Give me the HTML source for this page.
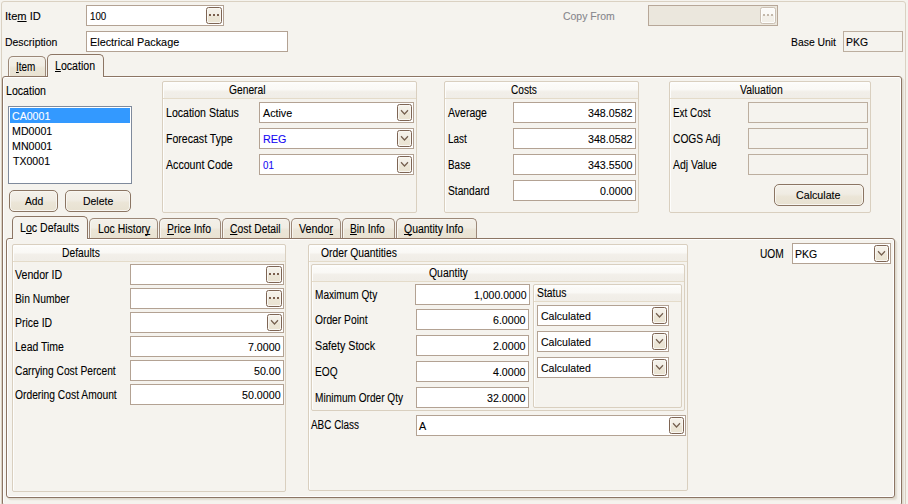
<!DOCTYPE html>
<html><head><meta charset="utf-8"><title>Item Location</title>
<style>
*{box-sizing:border-box;margin:0;padding:0}
html,body{width:908px;height:504px;overflow:hidden;background:#f5f3ee}
body{position:relative;font-family:"Liberation Sans",sans-serif;font-size:12px;color:#000;line-height:14px}
.a{position:absolute}
.t{position:absolute;white-space:nowrap;height:14px;transform-origin:0 0;-webkit-text-stroke:0.1px currentColor}
.t.s{font-size:11px}
.in{position:absolute;background:#fff;border:1px solid #b3a293}
.in.dis{background:#f5f3ee;border-color:#bcae9f}
.in.dis2{background:#ebe7dd;border-color:#b7a798}
.blue{color:#1408f4}
.eb,.cb{position:absolute;height:17px;border:1px solid #7e6554;border-radius:2.5px;background:linear-gradient(#f5f2ea 0,#f2eee5 48%,#ece6d7 52%,#eae3d2 100%);box-shadow:inset 0 0 0 1px #f9f7f2}
.eb{width:16px}
.cb{width:15px}
.eb i{position:absolute;top:6px;width:2px;height:2px;background:#7a5f4d}
.eb.d{border-color:#cbc0b4;background:linear-gradient(#fbfaf8 0,#faf9f6 50%,#f3f0ea 50%,#f2efe8 100%);box-shadow:inset 0 0 0 1px #fdfdfc}
.eb.d i{background:#c3b8ab}
.cb svg{position:absolute;left:2px;top:4px}
.grp{position:absolute;border:1px solid #d9cfbf;border-radius:2px;box-shadow:inset 1px 1px 0 #fdfdfc}
.grp .h{position:absolute;left:0;right:0;top:1px;height:16px;background:linear-gradient(#fdfdfc 0,#fbfaf7 12%,#faf9f6 42%,#f2efe9 58%,#f0ede7 100%);border-bottom:1px solid #e4dbc9;box-shadow:inset 1px 0 0 #fdfdfc}
.btn{position:absolute;border:1px solid #8b7563;border-radius:5px;background:linear-gradient(#f4f1ea 0,#f0ece3 45%,#ebe5d7 58%,#e8e1d1 100%);box-shadow:inset 0 0 0 1px #f8f6f1}
.tab{position:absolute;border:1px solid #9c8878;border-bottom:none;border-radius:5px 5px 0 0;background:linear-gradient(#f3f0e9 0,#f1ede4 45%,#ebe5d7 58%,#e9e2d2 100%);box-shadow:inset 1px 1px 0 #f7f5f0}
.tab.sel{background:#f5f3ee;border-color:#8c7564}
.pan{position:absolute;border:1px solid #8c7564;border-radius:3px;box-shadow:inset 0 0 0 1px #fff, 1px 1px 0 #dedace, 2px 2px 0 #e5e1d7, 3px 3px 0 #f1eee8}
u{text-decoration:underline;text-decoration-skip-ink:none}
</style></head>
<body>
<div class="a" style="left:1px;top:1px;width:905px;height:520px;border:1px solid #dad1c2;border-radius:3px"></div>
<div class="t  s" style="left:4.70px;top:9px;transform:scaleX(1.0099);">Ite<u>m</u> ID</div>
<div class="in " style="left:86px;top:5px;width:138px;height:21px"></div>
<div class="eb" style="left:206px;top:7px"><i style="left:2px"></i><i style="left:6px"></i><i style="left:10px"></i></div>
<div class="t  s" style="left:90.00px;top:9px;transform:scaleX(0.8882);">100</div>
<div class="t  s" style="left:4.70px;top:35px;transform:scaleX(0.9506);">Description</div>
<div class="in " style="left:86px;top:31px;width:202px;height:21px"></div>
<div class="t  s" style="left:90.00px;top:35px;transform:scaleX(0.9858);">Electrical Package</div>
<div class="t  s" style="left:562.50px;top:9px;transform:scaleX(0.9505);color:#86868c">Copy From</div>
<div class="in dis2" style="left:648px;top:5px;width:130px;height:21px"></div>
<div class="eb d" style="left:760px;top:7px"><i style="left:2px"></i><i style="left:6px"></i><i style="left:10px"></i></div>
<div class="t  s" style="left:790.50px;top:35px;transform:scaleX(0.9435);">Base Unit</div>
<div class="in dis" style="left:843px;top:31px;width:60px;height:21px"></div>
<div class="t  s" style="left:846.30px;top:35px;transform:scaleX(0.9471);">PKG</div>
<div class="pan" style="left:2px;top:76px;width:900px;height:430px"></div>
<div class="tab" style="left:8px;top:56px;width:38px;height:20px"></div>
<div class="t " style="left:16.00px;top:60px;transform:scaleX(0.8269);"><u>I</u>tem</div>
<div class="tab sel" style="left:47px;top:54px;width:57px;height:23px"></div>
<div class="a" style="left:48px;top:76px;width:55px;height:2px;background:#f5f3ee"></div>
<div class="t " style="left:55.30px;top:59px;transform:scaleX(0.8816);"><u>L</u>ocation</div>
<div class="t " style="left:6.30px;top:84px;transform:scaleX(0.8816);">Location</div>
<div class="a" style="left:8px;top:106px;width:124px;height:78px;background:#fff;border:1px solid #7f8a9c"></div>
<div class="a" style="left:10px;top:108px;width:120px;height:15px;background:#3399ff"></div>
<div class="t  s" style="left:12.20px;top:109px;transform:scaleX(0.9634);color:#fff">CA0001</div>
<div class="t  s" style="left:12.20px;top:124px;transform:scaleX(0.9692);">MD0001</div>
<div class="t  s" style="left:12.20px;top:139px;transform:scaleX(0.9692);">MN0001</div>
<div class="t  s" style="left:12.70px;top:154px;transform:scaleX(0.9604);">TX0001</div>
<div class="btn" style="left:9px;top:190px;width:49px;height:22px"></div>
<div class="t  s" style="left:24.70px;top:194px;transform:scaleX(0.9351);">Add</div>
<div class="btn" style="left:65px;top:190px;width:66px;height:22px"></div>
<div class="t  s" style="left:82.80px;top:194px;transform:scaleX(0.9497);">Delete</div>
<div class="grp" style="left:162px;top:81px;width:255px;height:132px"><div class="h"></div></div>
<div class="t " style="left:228.60px;top:83px;transform:scaleX(0.8550);">General</div>
<div class="t " style="left:166.30px;top:106px;transform:scaleX(0.8813);">Location Status</div>
<div class="in " style="left:259px;top:102px;width:155px;height:21px"></div>
<div class="cb" style="left:397px;top:104px"><svg width="9" height="7" viewBox="0 0 9 7"><path d="M1 1.3 L4.5 5 L8 1.3" fill="none" stroke="#75604f" stroke-width="1.25"/></svg></div>
<div class="t  s" style="left:262.50px;top:106px;transform:scaleX(0.9747);">Active</div>
<div class="t " style="left:166.30px;top:132px;transform:scaleX(0.8797);">Forecast Type</div>
<div class="in " style="left:259px;top:128px;width:155px;height:21px"></div>
<div class="cb" style="left:397px;top:130px"><svg width="9" height="7" viewBox="0 0 9 7"><path d="M1 1.3 L4.5 5 L8 1.3" fill="none" stroke="#75604f" stroke-width="1.25"/></svg></div>
<div class="t blue s" style="left:262.50px;top:132px;transform:scaleX(0.9776);">REG</div>
<div class="t " style="left:166.30px;top:158px;transform:scaleX(0.8849);">Account Code</div>
<div class="in " style="left:259px;top:154px;width:155px;height:21px"></div>
<div class="cb" style="left:397px;top:156px"><svg width="9" height="7" viewBox="0 0 9 7"><path d="M1 1.3 L4.5 5 L8 1.3" fill="none" stroke="#75604f" stroke-width="1.25"/></svg></div>
<div class="t blue s" style="left:262.50px;top:158px;transform:scaleX(0.8825);">01</div>
<div class="grp" style="left:444px;top:81px;width:195px;height:132px"><div class="h"></div></div>
<div class="t " style="left:510.50px;top:83px;transform:scaleX(0.8412);">Costs</div>
<div class="t " style="left:448.30px;top:106px;transform:scaleX(0.8746);">Average</div>
<div class="in " style="left:513px;top:102px;width:123px;height:21px"></div>
<div class="t  s" style="left:588.30px;top:106px;transform:scaleX(0.9699);">348.0582</div>
<div class="t " style="left:448.30px;top:132px;transform:scaleX(0.8245);">Last</div>
<div class="in " style="left:513px;top:128px;width:123px;height:21px"></div>
<div class="t  s" style="left:588.30px;top:132px;transform:scaleX(0.9699);">348.0582</div>
<div class="t " style="left:448.30px;top:158px;transform:scaleX(0.8263);">Base</div>
<div class="in " style="left:513px;top:154px;width:123px;height:21px"></div>
<div class="t  s" style="left:588.30px;top:158px;transform:scaleX(0.9699);">343.5500</div>
<div class="t " style="left:448.30px;top:184px;transform:scaleX(0.8522);">Standard</div>
<div class="in " style="left:513px;top:180px;width:123px;height:21px"></div>
<div class="t  s" style="left:600.30px;top:184px;transform:scaleX(0.9661);">0.0000</div>
<div class="grp" style="left:669px;top:81px;width:202px;height:132px"><div class="h"></div></div>
<div class="t " style="left:739.50px;top:83px;transform:scaleX(0.8688);">Valuation</div>
<div class="t " style="left:673.20px;top:106px;transform:scaleX(0.8269);">Ext Cost</div>
<div class="in dis" style="left:748px;top:102px;width:120px;height:21px"></div>
<div class="t " style="left:673.20px;top:132px;transform:scaleX(0.8528);">COGS Adj</div>
<div class="in dis" style="left:748px;top:128px;width:120px;height:21px"></div>
<div class="t " style="left:673.20px;top:158px;transform:scaleX(0.8697);">Adj Value</div>
<div class="in dis" style="left:748px;top:154px;width:120px;height:21px"></div>
<div class="btn" style="left:774px;top:184px;width:90px;height:22px"></div>
<div class="t  s" style="left:796.30px;top:188px;transform:scaleX(0.9703);">Calculate</div>
<div class="pan" style="left:6px;top:238px;width:889px;height:260px"></div>
<div class="tab sel" style="left:12px;top:216px;width:76px;height:23px"></div>
<div class="a" style="left:13px;top:238px;width:74px;height:2px;background:#f5f3ee"></div>
<div class="t " style="left:20.30px;top:221px;transform:scaleX(0.8831);">L<u>o</u>c Defaults</div>
<div class="tab" style="left:89px;top:218px;width:69px;height:20px"></div>
<div class="t " style="left:97.50px;top:222px;transform:scaleX(0.8697);">Loc Histor<u>y</u></div>
<div class="tab" style="left:159px;top:218px;width:62px;height:20px"></div>
<div class="t " style="left:167.20px;top:222px;transform:scaleX(0.8680);"><u>P</u>rice Info</div>
<div class="tab" style="left:222px;top:218px;width:68px;height:20px"></div>
<div class="t " style="left:229.70px;top:222px;transform:scaleX(0.8622);"><u>C</u>ost Detail</div>
<div class="tab" style="left:291px;top:218px;width:50px;height:20px"></div>
<div class="t " style="left:299.20px;top:222px;transform:scaleX(0.8967);">Vendo<u>r</u></div>
<div class="tab" style="left:342px;top:218px;width:53px;height:20px"></div>
<div class="t " style="left:350.30px;top:222px;transform:scaleX(0.8528);"><u>B</u>in Info</div>
<div class="tab" style="left:396px;top:218px;width:81px;height:20px"></div>
<div class="t " style="left:403.80px;top:222px;transform:scaleX(0.8701);"><u>Q</u>uantity Info</div>
<div class="grp" style="left:12px;top:244px;width:274px;height:248px"><div class="h"></div></div>
<div class="t " style="left:61.70px;top:246px;transform:scaleX(0.8587);">Defaults</div>
<div class="t " style="left:15.20px;top:268px;transform:scaleX(0.8844);">Vendor ID</div>
<div class="in " style="left:130px;top:264px;width:154px;height:21px"></div>
<div class="eb" style="left:266px;top:266px"><i style="left:2px"></i><i style="left:6px"></i><i style="left:10px"></i></div>
<div class="t " style="left:15.20px;top:292px;transform:scaleX(0.8586);">Bin Number</div>
<div class="in " style="left:130px;top:288px;width:154px;height:21px"></div>
<div class="eb" style="left:266px;top:290px"><i style="left:2px"></i><i style="left:6px"></i><i style="left:10px"></i></div>
<div class="t " style="left:15.20px;top:316px;transform:scaleX(0.8695);">Price ID</div>
<div class="in " style="left:130px;top:312px;width:154px;height:21px"></div>
<div class="cb" style="left:267px;top:314px"><svg width="9" height="7" viewBox="0 0 9 7"><path d="M1 1.3 L4.5 5 L8 1.3" fill="none" stroke="#75604f" stroke-width="1.25"/></svg></div>
<div class="t " style="left:15.20px;top:340px;transform:scaleX(0.8727);">Lead Time</div>
<div class="in " style="left:130px;top:336px;width:154px;height:21px"></div>
<div class="t  s" style="left:248.30px;top:340px;transform:scaleX(0.9661);">7.0000</div>
<div class="t " style="left:15.20px;top:364px;transform:scaleX(0.8531);">Carrying Cost Percent</div>
<div class="in " style="left:130px;top:360px;width:154px;height:21px"></div>
<div class="t  s" style="left:254.10px;top:364px;transform:scaleX(0.9699);">50.00</div>
<div class="t " style="left:15.20px;top:388px;transform:scaleX(0.8566);">Ordering Cost Amount</div>
<div class="in " style="left:130px;top:384px;width:154px;height:21px"></div>
<div class="t  s" style="left:242.20px;top:388px;transform:scaleX(0.9707);">50.0000</div>
<div class="grp" style="left:308px;top:244px;width:380px;height:247px"><div class="h"></div></div>
<div class="t " style="left:320.50px;top:246px;transform:scaleX(0.8610);">Order Quantities</div>
<div class="grp" style="left:311px;top:264px;width:374px;height:147px"><div class="h"></div></div>
<div class="t " style="left:428.70px;top:266px;transform:scaleX(0.8682);">Quantity</div>
<div class="t " style="left:314.60px;top:288px;transform:scaleX(0.8405);">Maximum Qty</div>
<div class="in " style="left:415px;top:284px;width:115px;height:21px"></div>
<div class="t  s" style="left:474.20px;top:288px;transform:scaleX(0.9536);">1,000.0000</div>
<div class="t " style="left:314.60px;top:313px;transform:scaleX(0.8556);">Order Point</div>
<div class="in " style="left:416px;top:309px;width:113px;height:21px"></div>
<div class="t  s" style="left:493.30px;top:313px;transform:scaleX(0.9661);">6.0000</div>
<div class="t " style="left:314.60px;top:339px;transform:scaleX(0.8903);">Safety Stock</div>
<div class="in " style="left:416px;top:335px;width:113px;height:21px"></div>
<div class="t  s" style="left:493.30px;top:339px;transform:scaleX(0.9661);">2.0000</div>
<div class="t " style="left:314.60px;top:365px;transform:scaleX(0.8474);">EOQ</div>
<div class="in " style="left:416px;top:361px;width:113px;height:21px"></div>
<div class="t  s" style="left:493.30px;top:365px;transform:scaleX(0.9661);">4.0000</div>
<div class="t " style="left:314.60px;top:391px;transform:scaleX(0.8407);">Minimum Order Qty</div>
<div class="in " style="left:416px;top:387px;width:113px;height:21px"></div>
<div class="t  s" style="left:487.30px;top:391px;transform:scaleX(0.9682);">32.0000</div>
<div class="grp" style="left:533px;top:284px;width:149px;height:124px"><div class="h"></div></div>
<div class="t " style="left:537.20px;top:286px;transform:scaleX(0.8642);">Status</div>
<div class="in " style="left:537px;top:305px;width:132px;height:21px"></div>
<div class="cb" style="left:652px;top:307px"><svg width="9" height="7" viewBox="0 0 9 7"><path d="M1 1.3 L4.5 5 L8 1.3" fill="none" stroke="#75604f" stroke-width="1.25"/></svg></div>
<div class="t  s" style="left:540.50px;top:309px;transform:scaleX(0.9582);">Calculated</div>
<div class="in " style="left:537px;top:331px;width:132px;height:21px"></div>
<div class="cb" style="left:652px;top:333px"><svg width="9" height="7" viewBox="0 0 9 7"><path d="M1 1.3 L4.5 5 L8 1.3" fill="none" stroke="#75604f" stroke-width="1.25"/></svg></div>
<div class="t  s" style="left:540.50px;top:335px;transform:scaleX(0.9582);">Calculated</div>
<div class="in " style="left:537px;top:357px;width:132px;height:21px"></div>
<div class="cb" style="left:652px;top:359px"><svg width="9" height="7" viewBox="0 0 9 7"><path d="M1 1.3 L4.5 5 L8 1.3" fill="none" stroke="#75604f" stroke-width="1.25"/></svg></div>
<div class="t  s" style="left:540.50px;top:361px;transform:scaleX(0.9582);">Calculated</div>
<div class="t " style="left:311.30px;top:418px;transform:scaleX(0.8257);">ABC Class</div>
<div class="in " style="left:416px;top:415px;width:270px;height:21px"></div>
<div class="cb" style="left:669px;top:417px"><svg width="9" height="7" viewBox="0 0 9 7"><path d="M1 1.3 L4.5 5 L8 1.3" fill="none" stroke="#75604f" stroke-width="1.25"/></svg></div>
<div class="t  s" style="left:419.20px;top:419px;transform:scaleX(0.9800);">A</div>
<div class="t " style="left:759.50px;top:247px;transform:scaleX(0.8500);">UOM</div>
<div class="in " style="left:792px;top:243px;width:99px;height:21px"></div>
<div class="cb" style="left:874px;top:245px"><svg width="9" height="7" viewBox="0 0 9 7"><path d="M1 1.3 L4.5 5 L8 1.3" fill="none" stroke="#75604f" stroke-width="1.25"/></svg></div>
<div class="t  s" style="left:795.30px;top:247px;transform:scaleX(0.9557);">PKG</div>
</body></html>
